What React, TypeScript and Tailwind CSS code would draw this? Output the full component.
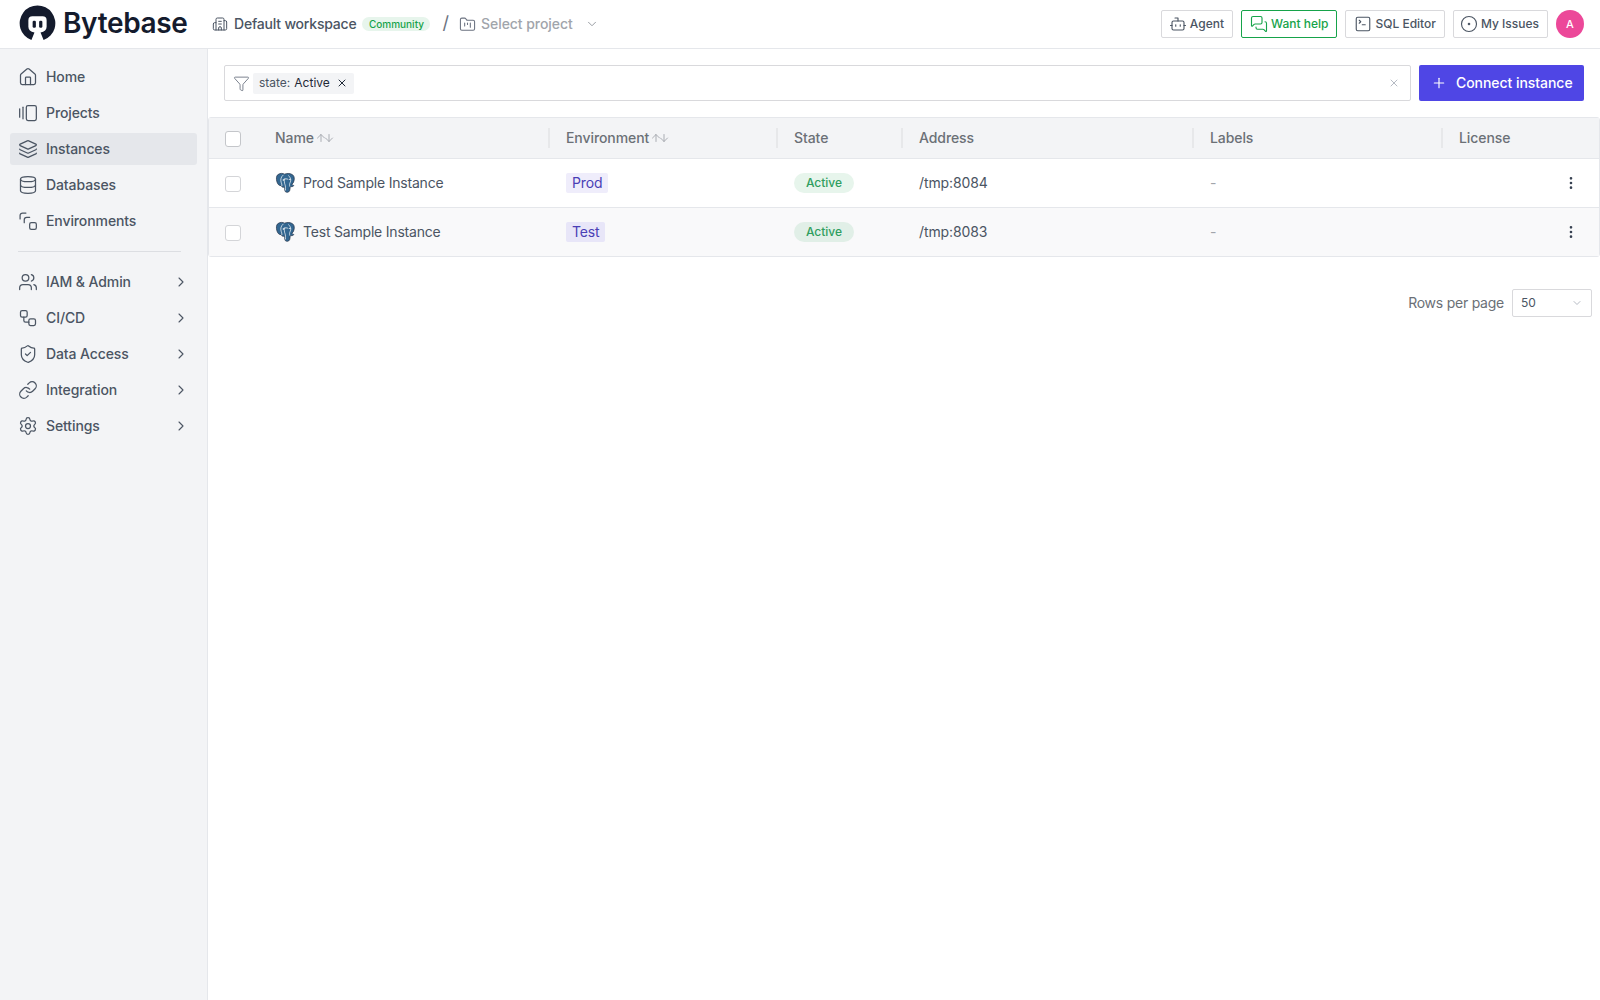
import {
  House, GalleryHorizontalEnd, Layers, Database, Users, Workflow, ShieldCheck, Link, Settings,
  ChevronRight, ChevronDown, Bot, MessagesSquare, SquareTerminal, CircleDot, Building2, FolderKanban,
  Funnel, X, Plus, EllipsisVertical, ArrowUp, ArrowDown,
} from "lucide-react";

function Logo() {
  return (
    <svg width="37" height="36" viewBox="0 0 36 35.5" className="mb-[2px] shrink-0">
      <path
        fill="#141b2d"
        d="M12 34.6 A17.6 17.6 0 1 1 24 34.6 L21 27 C25 26.5 27 24.5 27 21.5 V15 A4 4 0 0 0 23 11 H13 A4 4 0 0 0 9 15 V21.5 C9 24.5 11 26.5 15 27 Z"
      />
      <rect x="13.2" y="15.5" width="3.2" height="7" rx="1.3" fill="#141b2d" />
      <rect x="19.6" y="15.5" width="3.2" height="7" rx="1.3" fill="#141b2d" />
    </svg>
  );
}

function EnvIcon({ size = 20, strokeWidth = 1.5, className = "" }: { size?: number; strokeWidth?: number; className?: string }) {
  return (
    <svg width={size} height={size} viewBox="0 0 24 24" fill="none" stroke="currentColor" strokeWidth={strokeWidth} strokeLinecap="round" strokeLinejoin="round" className={className}>
      <path d="M9.5 2.5H5.5a3 3 0 0 0-3 3v4" />
      <path d="M14 7.5h-3.5a3 3 0 0 0-3 3V14" />
      <rect x="14" y="14" width="8" height="8" rx="2" />
    </svg>
  );
}

function Postgres() {
  return (
    <svg width="21" height="22" viewBox="0 0 24 25" className="shrink-0">
      <path
        fill="#336791"
        stroke="#1f2f46"
        strokeWidth="0.8"
        d="M3 3.2C5.5 1 9 1.2 11 2.4c2-.9 6-1.4 9 .6 2.6 1.9 2.4 5.6 1.2 8.4-.4 1-1 1.9-1.8 2.2-.1 1 .9 1.4 1.8 1.6.8.8-1.6 2-3.6 1.2-.5 2-.5 4.2-1 5.2-.8 1.6-3.4 2-4.6 1-1-1-1-3.5-1.1-5.4-1.6.6-3.6-.2-3.8-1.8C5 16 2.8 14 2 10.5 1.4 7.6 1.4 4.8 3 3.2Z"
      />
      <path
        fill="none"
        stroke="#ffffff"
        strokeWidth="0.8"
        strokeLinecap="round"
        d="M9.4 3.4C6.9 5.2 6 8.6 7 11.6c.4 1.4 1.2 2.4 1 4M10.4 8c1.4-.5 3-.4 4.4.2M11 8.2c-.6 2-.4 4.2.4 6 .8 1.6.4 4.2.6 6.4M15.6 4.2c2.6 2.2 3 5.4 1.6 8-.6 1.2-.8 2.6-.4 4"
      />
      <circle cx="9.6" cy="9" r="0.9" fill="#ffffff" />
      <circle cx="17" cy="8.4" r="0.8" fill="#ffffff" />
    </svg>
  );
}

function NavItem({ icon: Icon, label, active, chevron }: { icon: any; label: string; active?: boolean; chevron?: boolean }) {
  return (
    <div className={`flex h-8 items-center rounded-[3px] pl-2 pr-2 ${active ? "bg-[#e5e7eb]" : ""}`}>
      <Icon size={20} strokeWidth={1.5} className="shrink-0 text-[#4b5563]" />
      <span className="mb-[2px] ml-2 flex-1 text-[14px] font-medium tracking-[-0.1px] text-[#4b5563]">{label}</span>
      {chevron && <ChevronRight size={16} strokeWidth={1.6} className="text-[#4b5563]" />}
    </div>
  );
}

function TopButton({ icon: Icon, label, green, pl = "pl-[7px]" }: { icon: any; label: string; green?: boolean; pl?: string }) {
  return (
    <div
      className={`flex h-7 items-center justify-center gap-[3px] rounded-[2px] border bg-white pr-2 text-[12px] font-medium ${pl} ${
        green ? "border-[#16a34a] text-[#16a34a]" : "border-[#d9d9dc] text-[#4b5563]"
      }`}
    >
      <Icon size={18} strokeWidth={1.5} className="shrink-0" />
      <span className="mb-[1px]">{label}</span>
    </div>
  );
}

function Sort() {
  return (
    <span className="ml-px flex items-center text-[#a1a5ab]">
      <ArrowUp size={12} strokeWidth={1.8} className="-mr-[4px]" />
      <ArrowDown size={12} strokeWidth={1.8} />
    </span>
  );
}

function Checkbox({ strong }: { strong?: boolean }) {
  return <span className={`mt-px block h-4 w-4 rounded-[3px] border-[1.5px] bg-white ${strong ? "border-[#c4c6ca]" : "border-[#d4d5d8]"}`} />;
}

const gridCols = "grid grid-cols-[49px_290px_228px_125px_291px_249px_1fr]";

function HeadCell({ label, sort, first }: { label: string; sort?: boolean; first?: boolean }) {
  return (
    <div className="flex h-full items-center">
      <span className={`h-5 w-[2px] shrink-0 ${first ? "" : "bg-[#e7e8ea]"}`} />
      <span className={`mb-[2px] text-[14px] font-medium tracking-[-0.08px] text-[#6b7076] ${first ? "ml-[15px]" : "ml-4"}`}>{label}</span>
      {sort && <Sort />}
    </div>
  );
}

function Row({ name, env, addr, shade }: { name: string; env: string; addr: string; shade?: boolean }) {
  return (
    <div className={`${gridCols} items-center ${shade ? "h-12 bg-[#f9f9fa]" : "h-[49px] border-b border-[#e5e7eb] bg-white"}`}>
      <div className="pl-[16px]">
        <Checkbox />
      </div>
      <div className="flex items-center pl-[17px]">
        <Postgres />
        <span className="mb-[2px] ml-[7px] text-[14px] tracking-[-0.2px] text-[#4b5563]">{name}</span>
      </div>
      <div className="flex pl-[18px]">
        <span className={`h-5 rounded-[2px] px-[6px] text-[14px] leading-5 tracking-[-0.15px] text-[#4a3fb5] ${shade ? "bg-[#e8e6f8]" : "bg-[#efedfb]"}`}>{env}</span>
      </div>
      <div className="flex pl-[18px]">
        <span className={`flex h-5 w-[60px] items-center justify-center rounded-full text-[12px] font-medium text-[#2f9e5f] ${shade ? "bg-[#e1efe7]" : "bg-[#e7f5ec]"}`}>Active</span>
      </div>
      <div className="mb-[2px] pl-[18px] text-[14px] tracking-[-0.1px] text-[#4b5563]">{addr}</div>
      <div className="mb-[2px] pl-[18px] text-[14px] text-[#a1a5ab]">-</div>
      <div className="flex justify-end pr-[20px]">
        <EllipsisVertical size={16} strokeWidth={2} className="text-[#374151]" />
      </div>
    </div>
  );
}

export default function App() {
  return (
    <div className="flex h-[1000px] w-[1600px] flex-col overflow-hidden bg-white font-[family-name:Inter,sans-serif]">
      <header className="flex h-[49px] shrink-0 items-center border-b border-[#e5e7eb] pr-4 pl-[19px]">
        <Logo />
        <span className="ml-[7px] mb-[2px] w-[125px] text-[28px] leading-none font-semibold tracking-[-0.35px] text-[#141b2d]">Bytebase</span>
        <Building2 size={16} strokeWidth={1.5} className="ml-[24px] text-[#4b5563]" />
        <span className="mb-[2px] ml-[6px] text-[14px] font-medium tracking-[-0.2px] text-[#4b5563]">Default workspace</span>
        <span className="ml-[6px] flex h-[14px] w-[68px] items-center justify-center rounded-full bg-[#e7f5ec] text-[10px] font-medium text-[#16a34a]">Community</span>
        <span className="mb-[2px] ml-[12px] text-[18px] leading-none text-[#6b7280]">/</span>
        <FolderKanban size={17} strokeWidth={1.5} className="ml-[10px] text-[#6b7280]" />
        <span className="mb-[2px] ml-[5px] text-[14px] font-medium tracking-[-0.05px] text-[#a1a5ab]">Select project</span>
        <ChevronDown size={14} strokeWidth={1.5} className="ml-[12px] text-[#8a8f96]" />
        <div className="ml-auto flex items-center gap-2">
          <TopButton icon={Bot} label="Agent" />
          <TopButton icon={MessagesSquare} label="Want help" green pl="pl-2" />
          <TopButton icon={SquareTerminal} label="SQL Editor" pl="pl-2" />
          <TopButton icon={CircleDot} label="My Issues" pl="pl-[6px]" />
          <div className="flex h-7 w-7 items-center justify-center rounded-full bg-[#ec4899] text-[11px] font-medium text-white">A</div>
        </div>
      </header>
      <div className="flex min-h-0 flex-1">
        <aside className="w-[208px] shrink-0 border-r border-[#e5e7eb] bg-[#f3f4f6] px-[10px] pt-[12px]">
          <div className="flex flex-col gap-1">
            <NavItem icon={House} label="Home" />
            <NavItem icon={GalleryHorizontalEnd} label="Projects" />
            <NavItem icon={Layers} label="Instances" active />
            <NavItem icon={Database} label="Databases" />
            <NavItem icon={EnvIcon} label="Environments" />
          </div>
          <div className="my-[14px] mr-[16px] ml-2 h-px bg-[#dcdee2]" />
          <div className="flex flex-col gap-1">
            <NavItem icon={Users} label="IAM & Admin" chevron />
            <NavItem icon={Workflow} label="CI/CD" chevron />
            <NavItem icon={ShieldCheck} label="Data Access" chevron />
            <NavItem icon={Link} label="Integration" chevron />
            <NavItem icon={Settings} label="Settings" chevron />
          </div>
        </aside>
        <main className="min-w-0 flex-1 pt-4">
          <div className="flex gap-2 px-4">
            <div className="flex h-9 flex-1 items-center rounded-[2px] border border-[#d9d9dc] pr-[10px] pl-2">
              <Funnel size={17} strokeWidth={1.25} className="text-[#6b7280]" />
              <div className="ml-[3px] flex h-[21px] items-center gap-1 rounded-[2px] bg-[#f3f4f6] pr-[6px] pl-[6px] text-[12px]">
                <span className="text-[#4b5563]">state:</span>
                <span className="text-[#1f2937]">Active</span>
                <X size={12} strokeWidth={2} className="ml-[2px] text-[#1f2937]" />
              </div>
              <X size={12} strokeWidth={1.5} className="ml-auto text-[#9ca3af]" />
            </div>
            <div className="flex h-9 w-[165px] items-center rounded-[2px] bg-[#4f46e5] pl-3 text-[14px] font-medium text-white">
              <Plus size={16} strokeWidth={1.75} />
              <span className="mb-[2px] ml-[9px] tracking-[-0.05px]">Connect instance</span>
            </div>
          </div>
          <div className="mt-4 rounded-[3px] border border-[#e5e7eb]">
            <div className={`${gridCols} h-[41px] items-center border-b border-[#e5e7eb] bg-[#f3f4f6]`}>
              <div className="pl-[16px]">
                <Checkbox strong />
              </div>
              <HeadCell label="Name" sort first />
              <HeadCell label="Environment" sort />
              <HeadCell label="State" />
              <HeadCell label="Address" />
              <HeadCell label="Labels" />
              <HeadCell label="License" />
            </div>
            <Row name="Prod Sample Instance" env="Prod" addr="/tmp:8084" />
            <Row name="Test Sample Instance" env="Test" addr="/tmp:8083" shade />
          </div>
          <div className="mt-8 flex items-center justify-end gap-2 pr-2">
            <span className="mb-[2px] text-[14px] tracking-[-0.24px] text-[#6b7076]">Rows per page</span>
            <div className="flex h-7 w-[80px] items-center justify-between rounded-[2px] border border-[#d9d9dc] pr-2 pl-2 text-[12px] text-[#4b5563]">
              <span>50</span>
              <ChevronDown size={12} strokeWidth={1.5} className="text-[#9ca3af]" />
            </div>
          </div>
        </main>
      </div>
    </div>
  );
}
